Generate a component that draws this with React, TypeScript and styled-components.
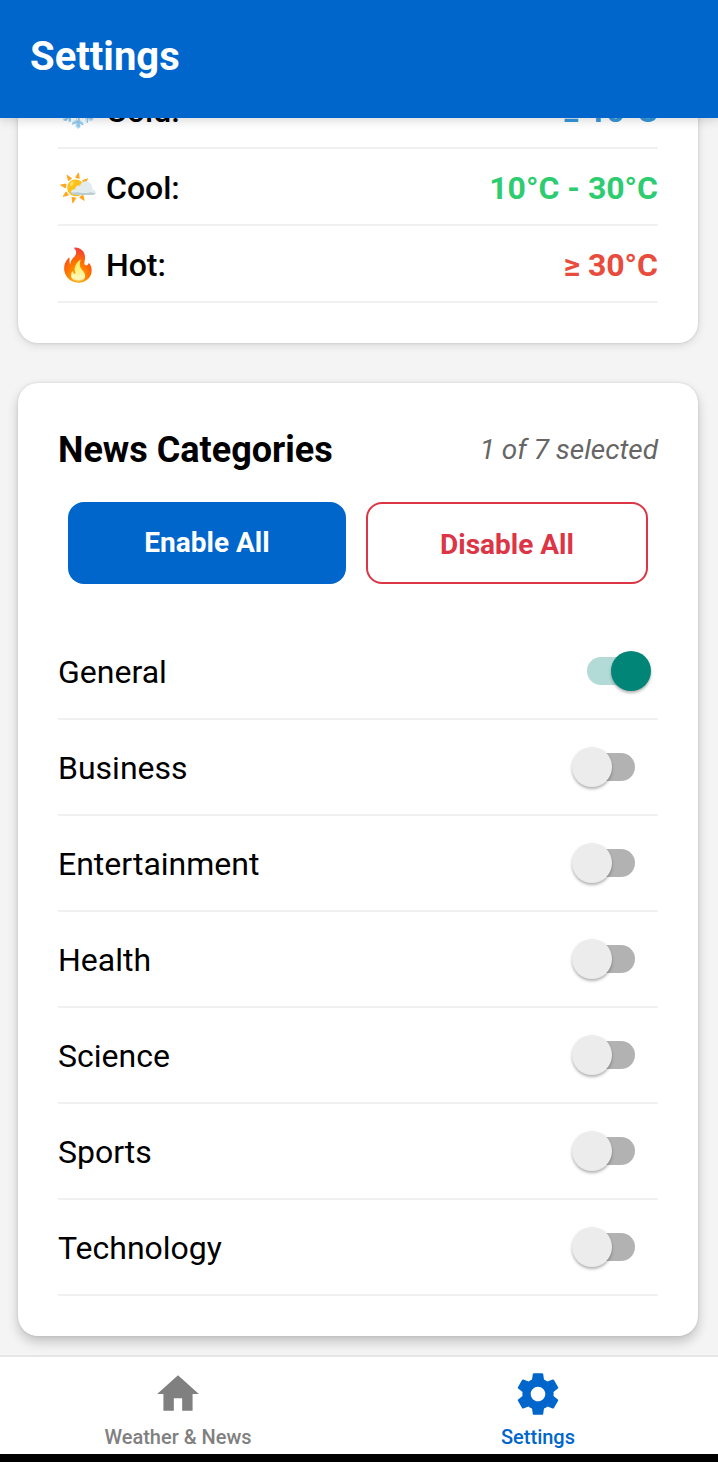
import React, { useState } from "react";
import styled, { createGlobalStyle } from "styled-components";

const GlobalStyle = createGlobalStyle`
  *, *::before, *::after { box-sizing: border-box; }
  html, body, #root { height: 100%; }
  body {
    margin: 0;
    background: #f4f4f4;
    color: #000;
    font-family: Roboto, "Noto Color Emoji", "Liberation Sans", sans-serif;
  }
`;

const Screen = styled.div`
  display: flex;
  flex-direction: column;
  height: 100%;
`;

const Header = styled.header`
  position: relative;
  z-index: 1;
  flex: none;
  padding: 33px 30px 37px;
  background: #0066cc;
  box-shadow: 0 2px 10px rgba(0, 0, 0, 0.16);
`;

const ScreenTitle = styled.h1`
  margin: 0;
  color: #fff;
  font-size: 40px;
  line-height: 48px;
  font-weight: 700;
`;

/* Reversed column: the scroll position starts at the last card. */
const Scroller = styled.main`
  flex: 1;
  min-height: 0;
  display: flex;
  flex-direction: column-reverse;
  overflow-y: auto;
  scrollbar-width: none;
`;

const CardList = styled.div`
  display: flex;
  flex-direction: column;
  gap: 40px;
  padding: 20px 20px 19px 18px;
`;

const Card = styled.section<{ $raised?: boolean }>`
  padding: 40px;
  border-radius: 20px;
  background: #fff;
  box-shadow: ${(p) =>
    p.$raised
      ? "0 6px 12px rgba(0, 0, 0, 0.2), 0 0 3px rgba(0, 0, 0, 0.12)"
      : "0 2px 10px rgba(0, 0, 0, 0.12), 0 0 3px rgba(0, 0, 0, 0.14)"};
`;

const RangeRow = styled.div`
  display: flex;
  justify-content: space-between;
  align-items: center;
  height: 77px;
  padding-top: 2px;
  border-bottom: 2px solid #f0f0f0;
  font-size: 32px;
  line-height: 38px;
`;

const RangeLabel = styled.span`
  display: flex;
  align-items: center;
  gap: 8px;
  font-weight: 500;
`;

const Emoji = styled.span`
  width: 40px;
  text-align: center;
`;

const RangeValue = styled.span<{ $color: string }>`
  color: ${(p) => p.$color};
  font-weight: 700;
`;

const CardHead = styled.div`
  display: flex;
  justify-content: space-between;
  align-items: center;
  padding: 5px 0 30px;
`;

const CardTitle = styled.h2`
  margin: 0;
  font-size: 36px;
  line-height: 44px;
  font-weight: 700;
`;

const Count = styled.span`
  color: #666;
  font-size: 28px;
  line-height: 34px;
  font-style: italic;
`;

const ButtonRow = styled.div`
  display: flex;
  gap: 20px;
  padding: 0 10px 40px;
`;

const ActionButton = styled.button<{ $outlined?: boolean }>`
  box-sizing: content-box;
  flex: 1 1 0;
  display: flex;
  justify-content: center;
  align-items: flex-start;
  padding: 24px 0 20px;
  border: ${(p) => (p.$outlined ? "2px solid #dc3545" : "0")};
  border-radius: 16px;
  background: ${(p) => (p.$outlined ? "#fff" : "#0066cc")};
  color: ${(p) => (p.$outlined ? "#dc3545" : "#fff")};
  font: 700 28px/34px Roboto, "Liberation Sans", sans-serif;
  cursor: pointer;
`;

const CategoryRow = styled.label`
  display: flex;
  justify-content: space-between;
  align-items: center;
  height: 96px;
  border-bottom: 2px solid #f0f0f0;
  cursor: pointer;
`;

const CategoryName = styled.span`
  padding-top: 2px;
  font-size: 32px;
  line-height: 38px;
`;

const Switch = styled.input.attrs({ type: "checkbox", role: "switch" })`
  appearance: none;
  display: flex;
  align-items: center;
  width: 48px;
  height: 28px;
  margin: 0 23px 0 0;
  border-radius: 14px;
  background: #b2b2b2;
  cursor: pointer;

  &::before {
    content: "";
    flex: none;
    width: 40px;
    height: 40px;
    margin-left: -15px;
    border-radius: 50%;
    background: #ececec;
    box-shadow: 0 2px 3px rgba(0, 0, 0, 0.3);
  }

  &:checked {
    background: #b2dbd7;
  }

  &:checked::before {
    margin-left: 24px;
    background: #008577;
  }
`;

const TabBar = styled.nav`
  flex: none;
  display: flex;
  margin-left: -2px;
  border-top: 2px solid #e6e6e6;
  border-bottom: 8px solid #000;
  background: #fff;
`;

const Tab = styled.a<{ $active?: boolean }>`
  flex: 1;
  display: flex;
  flex-direction: column;
  align-items: center;
  padding: 12px 0 5px;
  gap: 6px;
  color: ${(p) => (p.$active ? "#0066cc" : "#808080")};
  font-size: 20px;
  line-height: 24px;
  font-weight: 500;
  text-decoration: none;
`;

const TabIcon = styled.svg`
  width: 50px;
  height: 50px;
  fill: currentColor;
`;

const ranges = [
  { emoji: "❄️", label: "Cold:", value: "≤ 10°C", color: "#3498db" },
  { emoji: "🌤️", label: "Cool:", value: "10°C - 30°C", color: "#2ecc71" },
  { emoji: "🔥", label: "Hot:", value: "≥ 30°C", color: "#e74c3c" },
];

const categories = [
  "General",
  "Business",
  "Entertainment",
  "Health",
  "Science",
  "Sports",
  "Technology",
];

export default function App() {
  const [selected, setSelected] = useState<string[]>(["General"]);

  const toggle = (name: string) =>
    setSelected((current) =>
      current.includes(name)
        ? current.filter((item) => item !== name)
        : [...current, name],
    );

  return (
    <Screen>
      <GlobalStyle />
      <Header>
        <ScreenTitle>Settings</ScreenTitle>
      </Header>
      <Scroller>
        <CardList>
          <Card>
            {ranges.map((range) => (
              <RangeRow key={range.label}>
                <RangeLabel>
                  <Emoji>{range.emoji}</Emoji>
                  {range.label}
                </RangeLabel>
                <RangeValue $color={range.color}>{range.value}</RangeValue>
              </RangeRow>
            ))}
          </Card>
          <Card $raised>
            <CardHead>
              <CardTitle>News Categories</CardTitle>
              <Count>
                {selected.length} of {categories.length} selected
              </Count>
            </CardHead>
            <ButtonRow>
              <ActionButton type="button" onClick={() => setSelected(categories)}>
                Enable All
              </ActionButton>
              <ActionButton type="button" $outlined onClick={() => setSelected([])}>
                Disable All
              </ActionButton>
            </ButtonRow>
            {categories.map((name) => (
              <CategoryRow key={name}>
                <CategoryName>{name}</CategoryName>
                <Switch
                  checked={selected.includes(name)}
                  onChange={() => toggle(name)}
                />
              </CategoryRow>
            ))}
          </Card>
        </CardList>
      </Scroller>
      <TabBar>
        <Tab href="#news">
          <TabIcon viewBox="0 0 24 24" aria-hidden="true">
            <path d="M10 20v-6h4v6h5v-8h3L12 3 2 12h3v8z" />
          </TabIcon>
          Weather &amp; News
        </Tab>
        <Tab href="#settings" $active aria-current="page">
          <TabIcon viewBox="0 0 24 24" aria-hidden="true">
            <path d="M19.43 12.98c.04-.32.07-.64.07-.98s-.03-.66-.07-.98l2.11-1.65c.19-.15.24-.42.12-.64l-2-3.46c-.12-.22-.39-.3-.61-.22l-2.49 1c-.52-.4-1.08-.73-1.69-.98l-.38-2.65C14.46 2.18 14.25 2 14 2h-4c-.25 0-.46.18-.49.42l-.38 2.65c-.61.25-1.17.59-1.69.98l-2.49-1c-.23-.09-.49 0-.61.22l-2 3.46c-.13.22-.07.49.12.64l2.11 1.65c-.04.32-.07.65-.07.98s.03.66.07.98l-2.11 1.65c-.19.15-.24.42-.12.64l2 3.46c.12.22.39.3.61.22l2.49-1c.52.4 1.08.73 1.69.98l.38 2.65c.03.24.24.42.49.42h4c.25 0 .46-.18.49-.42l.38-2.65c.61-.25 1.17-.59 1.69-.98l2.49 1c.23.09.49 0 .61-.22l2-3.46c.12-.22.07-.49-.12-.64l-2.11-1.65zM12 15.500c-1.930 0-3.500-1.570-3.500-3.500s1.570-3.500 3.500-3.500 3.500 1.570 3.500 3.500-1.570 3.500-3.500 3.500z" />
          </TabIcon>
          Settings
        </Tab>
      </TabBar>
    </Screen>
  );
}
